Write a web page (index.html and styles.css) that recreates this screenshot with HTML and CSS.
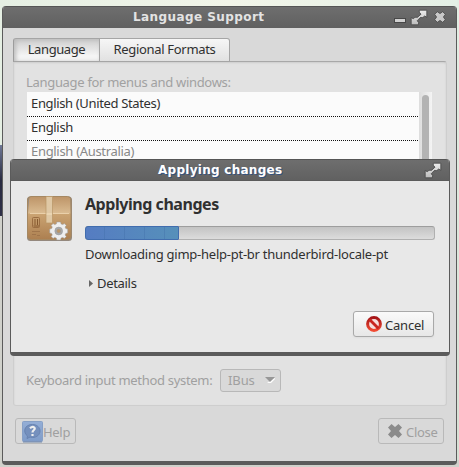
FILE: index.html
```
<!DOCTYPE html>
<html lang="en">
<head>
<meta charset="utf-8">
<title>Language Support</title>
<link rel="stylesheet" href="styles.css">
</head>
<body>
<svg class="defs" width="0" height="0">
  <defs>
    <linearGradient id="metal" x1="0" y1="0" x2="0" y2="1"><stop offset="0" stop-color="#ececec"/><stop offset="1" stop-color="#bcbcbc"/></linearGradient>
    <linearGradient id="boxtop" x1="0" y1="0" x2="0" y2="1"><stop offset="0" stop-color="#bd9468"/><stop offset="1" stop-color="#dbbd93"/></linearGradient>
    <linearGradient id="boxfront" x1="0" y1="0" x2="0" y2="1"><stop offset="0" stop-color="#cba473"/><stop offset="1" stop-color="#ad8051"/></linearGradient>
    <linearGradient id="red" x1="0" y1="0" x2="0" y2="1"><stop offset="0" stop-color="#a51417"/><stop offset="1" stop-color="#f04a32"/></linearGradient>
    <linearGradient id="blue" x1="0" y1="0" x2="0" y2="1"><stop offset="0" stop-color="#94aed6"/><stop offset="1" stop-color="#7f9cc9"/></linearGradient>
    <symbol id="expand" viewBox="0 0 18 17">
      <path d="M9.300 1.200H16.800V8.300L14.700 7 12.800 8.600H10.200L8.800 10.200 7.200 11.700 8.700 13.700 8.300 15.800H1.200V8.500L3.200 9.700 5 8.300H7.700L9 6.900 11 5.200 9.300 3.200Z" fill="url(#metal)" stroke="#454545" stroke-width=".8" stroke-linejoin="round"/>
    </symbol>
  </defs>
</svg>
<main class="window">
  <header class="titlebar">
    <h1 class="title title-main">Language Support</h1>
    <div class="controls">
      <span class="minimize"></span>
      <svg class="expand" width="18" height="17"><use href="#expand"/></svg>
      <svg class="shut" width="12" height="12" viewBox="0 0 12 12"><path d="M3.300.7 6 2.600 8.700.7 11.300 3.300 9.400 6 11.300 8.700 8.700 11.300 6 9.400 3.300 11.300.7 8.700 2.600 6 .7 3.300Z" fill="#c9c9c9" stroke="#484848" stroke-width=".8" stroke-linejoin="round"/></svg>
    </div>
  </header>
  <nav class="tabs">
    <span class="tab active"><span class="t-language">Language</span></span>
    <span class="tab"><span class="t-regional">Regional Formats</span></span>
  </nav>
  <section class="panel">
    <div class="list-label">Language for menus and windows:</div>
    <div class="list">
      <ul class="rows">
        <li><span class="t-us">English (United States)</span></li>
        <li><span>English</span></li>
        <li class="muted"><span>English (Australia)</span></li>
      </ul>
      <div class="scrollbar"><span class="thumb"></span></div>
    </div>
    <div class="method">
      <label>Keyboard input method system:</label>
      <span class="combo"><span>IBus</span><svg width="11" height="7" viewBox="0 0 11 7"><path d="M2 6 10 1V2L6 6Z" fill="#fff"/><path d="M0 0H10L5 5Z" fill="#979797"/></svg></span>
    </div>
  </section>
  <footer class="actions">
    <span class="button help">
      <svg width="21" height="22" viewBox="0 0 21 22"><rect x=".5" y=".5" width="20" height="20" rx="1" fill="url(#blue)" stroke="#87a0c6"/><path d="M1 21H20" stroke="#7489aa"/><path d="M10.500 3.500C15 3.500 18 6.500 18 10S15 16.500 10.500 16.500L8 16 5 17.500 5.500 15C1 12 1.500 3.500 10.500 3.500Z" fill="#7590bd" stroke="#6883b1"/><path d="M8 7.300Q10.500 4.800 12.500 6.700C14 9 10.500 8.700 10.500 11.500M10.500 13V15" fill="none" stroke="#eee" stroke-width="2.200"/></svg>
      <span>Help</span>
    </span>
    <span class="button close">
      <svg width="14" height="14" viewBox="0 0 14 14"><path d="M3.500 0 7 3 10.500 0 14 3.500 11 7 14 10.500 10.500 14 7 11 3.500 14 0 10.500 3 7 0 3.500Z" fill="#8b8b8b"/></svg>
      <span>Close</span>
    </span>
  </footer>
</main>
<section class="dialog">
  <header class="titlebar">
    <h2 class="title title-dialog">Applying changes</h2>
    <svg class="expand dialog-expand" width="18" height="17"><use href="#expand"/></svg>
  </header>
  <div class="dialog-body">
    <svg class="package" width="48" height="48" viewBox="0 0 48 48">
      <rect x="1" y="1.500" width="45" height="44.500" rx="3.500" fill="#5b4735" opacity=".6"/>
      <path d="M2 19 3 4Q3.300 1.500 6 1.500H41Q44 1.500 44.300 4L45 19Z" fill="url(#boxtop)"/>
      <path d="M1.500 18.500H45V41Q45 44 42 44H4.500Q1.500 44 1.500 41Z" fill="url(#boxfront)"/>
      <path d="M4 18.500H43" stroke="#ead0aa"/>
      <rect x="1.500" y="1.500" width="43.500" height="43" rx="3.500" fill="none" stroke="#a58862"/>
      <path d="M20 1.500H26.500V28H20Z" fill="#dfc8a5" stroke="#b89566" stroke-width=".7"/>
      <path d="M20.500 19H26" stroke="#f4e0bd"/>
      <rect x="6.500" y="22.500" width="7" height="10" rx="1" fill="none" stroke="#9a6d42"/>
      <path d="M9 24V30M11.500 24V30M7.500 31H13" stroke="#85592f" stroke-width="1"/>
      <path d="M6 36.500H14M6 39.500H10M11 40.500H14" stroke="#9a7047" stroke-width=".8"/>
      <g transform="translate(32.700 36)" fill="#eee" stroke="#999" stroke-width=".5">
        <path d="M-1.900-9H1.900L2.400-7 4.100-6.400 5.600-7.400 7.600-5.400 6.400-4 7.100-2.400 9-1.900V1.900L7.100 2.400 6.400 4 7.600 5.400 5.600 7.400 4.100 6.400 2.400 7 1.900 9H-1.900L-2.400 7-4.100 6.400-5.600 7.400-7.600 5.400-6.400 4-7.100 2.400-9 1.900V-1.900L-7.100-2.400-6.400-4-7.600-5.400-5.600-7.400-4.100-6.400-2.400-7Z"/>
        <circle r="3.900" fill="#a9a9a9"/><circle r="2" fill="#bb9566"/>
      </g>
    </svg>
    <div class="progress-column">
      <h3 class="heading">Applying changes</h3>
      <div class="progress"><span class="fill"></span></div>
      <p class="status">Downloading gimp-help-pt-br thunderbird-locale-pt</p>
      <div class="details"><svg width="4" height="7"><path d="M0 0 4 3.500 0 7Z" fill="#666"/></svg><span>Details</span></div>
      <span class="button cancel">
        <svg width="16" height="16" viewBox="0 0 16 16"><circle cx="8" cy="8" r="6.400" fill="#f5dfdc" stroke="url(#red)" stroke-width="3"/><path d="M3.500 3.500 12.500 12.500" stroke="#c92620" stroke-width="2.800"/></svg>
        <span>Cancel</span>
      </span>
    </div>
  </div>
</section>
</body>
</html>
```
FILE: styles.css
```
* { box-sizing: border-box; }
body {
  margin: 0; width: 459px; height: 467px; padding: 6px 2px 2px; overflow: hidden;
  font: 13px/18px "Noto Sans", "Open Sans", sans-serif; color: #303030; letter-spacing: -.31px;
  background:
    linear-gradient(#6f7896, #292b41 50%, #2f3048) 0 145px / 2px 71px no-repeat,
    linear-gradient(#e2eee4, #d6dfd4) 457px 0 / 2px 460px no-repeat,
    linear-gradient(90deg, #e5efe3, #f2f5e9 50%, #e4f0e6) 0 0 / 100% 145px no-repeat,
    #d0d1cb;
}
body > .defs { position: absolute; }
svg { display: block; flex: none; }
h1, h2, h3, p, ul { margin: 0; padding: 0; }
span, label { white-space: nowrap; }
.window {
  display: flex; flex-direction: column; width: 455px; height: 459px;
  border: solid #5b5b5b; border-width: 0 1px 4px; border-radius: 4px;
  background: #d9d9d9; overflow: hidden;
}
.titlebar {
  display: flex; align-items: center; flex: none; height: 22px; margin: 0 -1px;
  background: linear-gradient(#6e6e6e, #606060); border-top: 1px solid #555;
}
.title { font: bold 12px/20px "DejaVu Sans", sans-serif; white-space: nowrap; padding-bottom: 1px; }
.title-main { margin-left: 131px; width: 133px; color: #e3e3e3; letter-spacing: .42px; }
.controls { display: flex; align-items: center; margin-left: 128px; }
.minimize { width: 12px; height: 5px; margin-top: 6px; border: 1px solid #484848; background: #d1d1d1; }
.controls .expand { margin-left: 4px; }
.shut { margin: -1px 0 0 6px; }
.tabs { display: flex; height: 24px; margin: 10px 0 0 10px; position: relative; }
.tab {
  display: flex; justify-content: center; width: 130px; height: 24px; padding-top: 1px;
  border: 1px solid #a5a5a5; border-left: 0; border-radius: 0 3px 0 0;
  background: linear-gradient(#f6f6f6, #e1e1e1);
}
.tab.active {
  width: 87px; border-left: 1px solid #9c9c9c; border-radius: 3px 0 0 0;
  background: linear-gradient(#cecece, #f4f4f4 75%); box-shadow: inset 2px 1px 4px #bbb;
}
.t-language { letter-spacing: -.4px; }
.panel {
  width: 434px; height: 345px; margin: -1px 0 0 10px; padding: 11px 13px 0;
  border: 1px solid #cecece; border-top: 1px solid #a8a8a8; border-radius: 0 3px 3px 3px;
  background: #e2e2e2; box-shadow: inset 0 1px 2px #ccc;
}
.list-label { height: 19px; margin-left: -1px; color: #a1a1a1; white-space: nowrap; }
.list { display: flex; width: 405px; height: 252px; background: #fbfbfb; }
.rows { width: 392px; list-style: none; }
.rows li { height: 24px; padding: 1px 4px; }
.rows li:not(.muted) {
  background: repeating-linear-gradient(90deg, #111 0 1px, transparent 1px 2px) 0 100% / 100% 1px no-repeat;
}
.rows li:first-child { height: 25px; padding-top: 2px; }
.t-us { letter-spacing: -.35px; }
.muted { color: #888; }
.scrollbar { width: 13px; padding: 3px 3px 0; background: linear-gradient(90deg, #ddd, #f4f4f4); }
.thumb { display: block; width: 7px; height: 240px; border-radius: 4px; background: #b3b3b3; }
.method { display: flex; align-items: center; height: 23px; margin-top: 25px; margin-left: -1px; color: #a0a0a0; }
.method label { width: 194px; letter-spacing: -.3px; margin-top: -1px; }
.combo {
  display: flex; align-items: center; justify-content: space-between; width: 61px; height: 23px;
  padding: 0 4px 1px 7px; border: 1px solid #b8b8b8; border-radius: 3px; background: #d9d9d9; letter-spacing: -.1px;
}
.actions { display: flex; justify-content: space-between; margin: 12px 12px 0; }
.button { display: flex; height: 26px; border: 1px solid #b9b9b9; border-radius: 3px; color: #a0a0a0; }
.button > span { padding-top: 4px; }
.help { width: 61px; padding-left: 6px; }
.help svg { margin: 2px 0 0; }
.close { width: 66px; padding-left: 9px; }
.close svg { margin: 5px 4px 0 0; }
.dialog {
  position: absolute; left: 10px; top: 159px; width: 440px; height: 197px;
  border: solid #5b5b5b; border-width: 0 1px 4px; border-radius: 4px; background: #e8e8e8; overflow: hidden;
}
.title-dialog { margin-left: 148px; width: 124px; color: #fff; text-shadow: 1px 1px #34527f; letter-spacing: .27px; }
.dialog-expand { margin-left: 142px; }
.dialog-body { display: flex; height: 171px; padding: 14px 14px 0; border-top: 1px solid #5b5b5b; margin-top: -1px; }
.package { margin: 0 0 0 1px; }
.progress-column { display: flex; flex-direction: column; width: 350px; margin-left: 11px; }
.heading { margin-top: -1px; font: bold 16px/20px "Noto Sans", "Open Sans", sans-serif; letter-spacing: -.45px; white-space: nowrap; }
.progress {
  flex: none; height: 14px; margin-top: 12px; border: 1px solid #b0b0b0; border-top-color: #9d9d9d;
  border-radius: 3px; background: linear-gradient(#c3c3c3, #dcdcdc);
}
.fill {
  display: block; width: 94px; height: 14px; margin: -1px; border: 1px solid #416dae; border-radius: 3px 1px 1px 3px;
  background: repeating-linear-gradient(90deg, transparent 0 18px, #416fa966 18px 19px, transparent 19px 20px), linear-gradient(90deg, #557cc2, #5690ba);
}
.status { margin-top: 5px; white-space: nowrap; letter-spacing: -.25px; }
.details { display: flex; align-items: center; gap: 4px; margin: 11px 0 0 3px; padding-left: 1px; }
.cancel {
  width: 81px; margin: 19px 1px 0 auto; padding-left: 12px; color: #303030;
  border-color: #a9a9a9; background: linear-gradient(#fafafa, #e7e7e7); box-shadow: 0 1px 2px #ddd; letter-spacing: -.2px;
}
.cancel svg { margin: 4px 3px 0 0; }
```
